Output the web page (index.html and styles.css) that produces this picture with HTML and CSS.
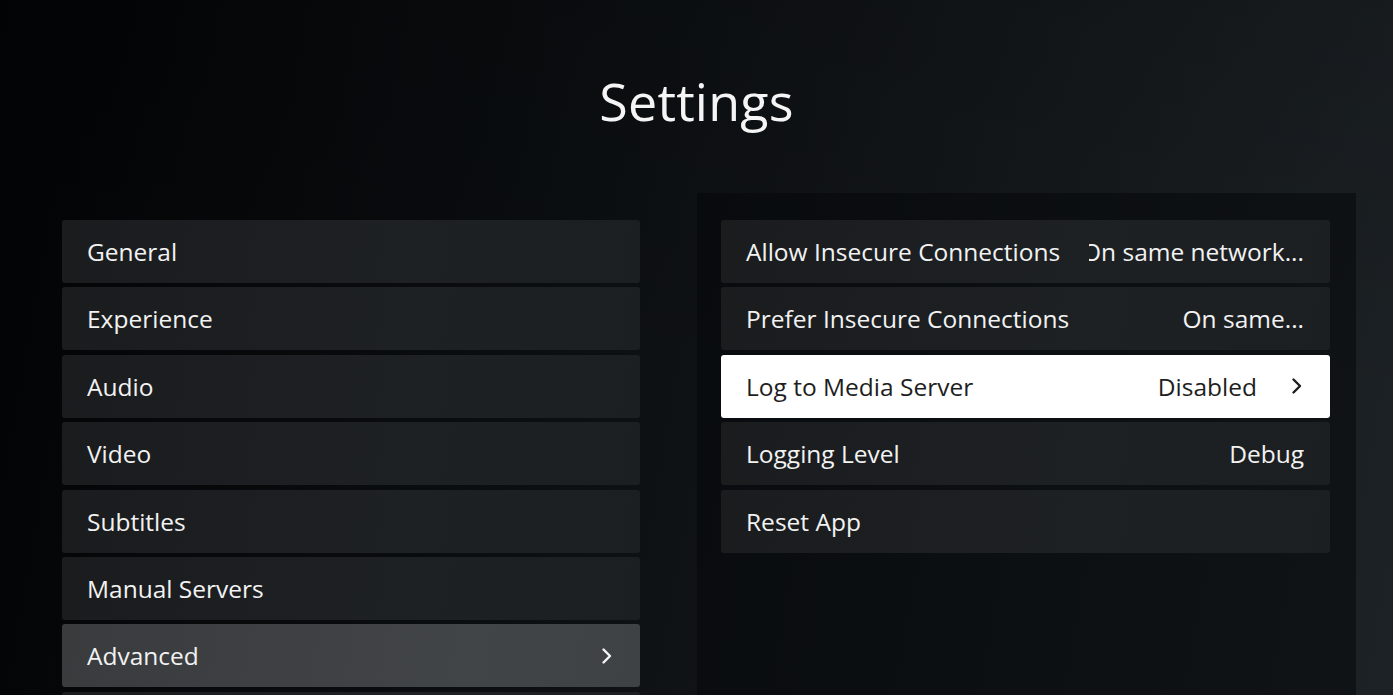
FILE: index.html
```html
<!DOCTYPE html>
<html>
<head>
<meta charset="utf-8">
<link rel="stylesheet" href="styles.css">
</head>
<body>
<div class="page">
  <header class="header"><h1 class="title">Settings</h1></header>
  <main class="content">
    <nav class="menu">
      <div class="item">General</div>
      <div class="item">Experience</div>
      <div class="item">Audio</div>
      <div class="item">Video</div>
      <div class="item">Subtitles</div>
      <div class="item">Manual Servers</div>
      <div class="item item-active"><span>Advanced</span>
        <svg class="chev" width="14" height="18" viewBox="0 0 14 18"><path d="M3.5 2.5 L10 9 L3.5 15.5" fill="none" stroke="currentColor" stroke-width="2.4" stroke-linecap="round" stroke-linejoin="round"/></svg>
      </div>
      <div class="item"></div>
    </nav>
    <section class="panel">
      <div class="row"><span class="label">Allow Insecure Connections</span><span class="value value-clip"><span>On same network...</span></span></div>
      <div class="row"><span class="label">Prefer Insecure Connections</span><span class="value">On same...</span></div>
      <div class="row row-focus"><span class="label">Log to Media Server</span><span class="value">Disabled
        <svg class="chev chev-dark" width="14" height="18" viewBox="0 0 14 18"><path d="M3.5 2.5 L10 9 L3.5 15.5" fill="none" stroke="currentColor" stroke-width="2.4" stroke-linecap="round" stroke-linejoin="round"/></svg></span></div>
      <div class="row"><span class="label">Logging Level</span><span class="value">Debug</span></div>
      <div class="row"><span class="label">Reset App</span></div>
    </section>
  </main>
</div>
</body>
</html>
```
FILE: styles.css
```css
html, body {
  margin: 0;
  padding: 0;
  height: 100%;
  overflow: hidden;
}
body {
  font-family: "Open Sans", "Noto Sans", sans-serif;
  color: #f2f2f2;
  background:
    linear-gradient(180deg, rgba(0,0,0,0.15) 0%, rgba(0,0,0,0) 60%),
    linear-gradient(100deg, #020304 0%, #0a0d0f 35%, #13171a 65%, #1d2226 100%);
}
.page {
  width: 1393px;
  height: 695px;
  overflow: hidden;
}
.header {
  height: 193px;
  display: flex;
  justify-content: center;
}
.title {
  margin: 71px 0 0 0;
  font-size: 52px;
  font-weight: 400;
  line-height: 60px;
  color: #f5f5f5;
  letter-spacing: 0.2px;
}
.content {
  display: flex;
  align-items: flex-start;
  padding-left: 62px;
}
.menu {
  width: 578px;
  padding-top: 27px;
  display: flex;
  flex-direction: column;
  gap: 4.4px;
  margin-right: 57px;
}
.item, .row {
  height: 63px;
  box-sizing: border-box;
  border-radius: 3px;
  padding: 0 26px 0 25px;
  display: flex;
  align-items: center;
  justify-content: space-between;
  font-size: 24.5px;
  background: linear-gradient(100deg, #1a1c1e 0%, #1e2124 60%, #1c1f22 100%);
  flex-shrink: 0;
}
.item-active {
  background: linear-gradient(100deg, #393b3d 0%, #424548 70%, #3f4245 100%);
}
.chev {
  color: #f5f5f5;
  display: block;
}
.panel {
  width: 659px;
  height: 520px;
  box-sizing: border-box;
  padding: 27px 26px 0 24px;
  background: rgba(4, 6, 8, 0.5);
  display: flex;
  flex-direction: column;
  gap: 4.4px;
}
.label {
  white-space: nowrap;
}
.value {
  white-space: nowrap;
  display: flex;
  align-items: center;
  gap: 33px;
}
.value-clip {
  width: 215px;
  overflow: hidden;
  justify-content: flex-end;
}
.value-clip span {
  flex-shrink: 0;
}
.row-focus {
  background: #ffffff;
  color: #1e1e1e;
}
.chev-dark {
  color: #1e1e1e;
}
```
